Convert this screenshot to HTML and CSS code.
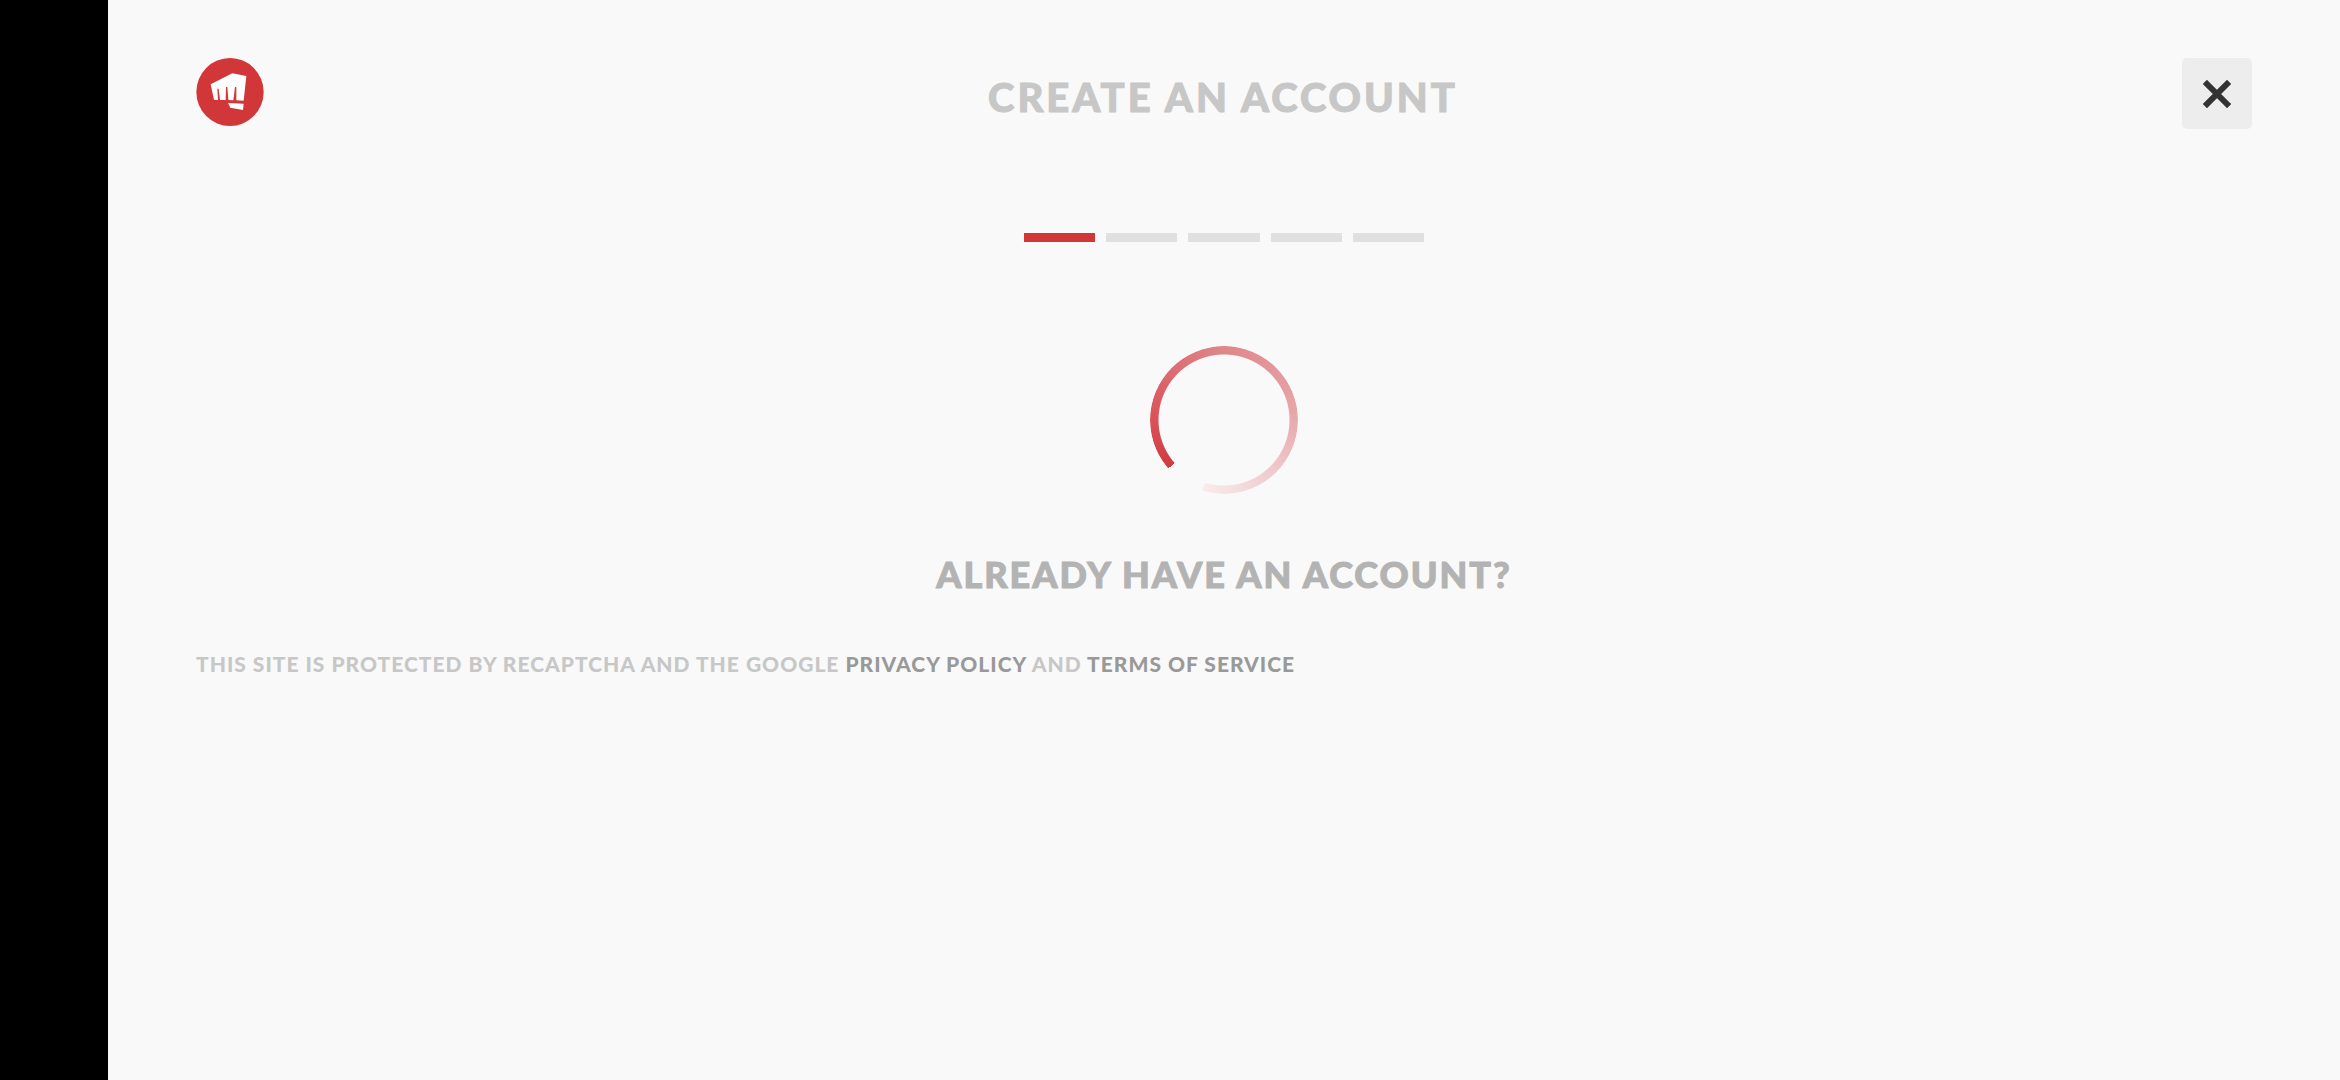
FILE: index.html
```html
<!DOCTYPE html>
<html lang="en">
<head>
    <meta charset="UTF-8">
    <meta name="viewport" content="width=device-width, initial-scale=1">
    <title>Create an account</title>
    <link rel="stylesheet" href="styles.css">
</head>
<body>
    <main class="signup">
        <header class="header">
            <a class="logo" href="/" aria-label="Home">
                <svg viewBox="0 0 202 204">
                    <ellipse cx="101" cy="102" rx="101" ry="102" fill="#d13639"/>
                    <path fill="#fff" d="M43 79 L108 46 L150 54 L142 128 L120 127 L120 87 L116 87 L111 127 L96 126 L93 87 L89 87 L88 126 L71 126 L67 92 L63 92 L65 126 L53 125 Z"/>
                    <path fill="#fff" d="M95 135 L142 137 L140 156 L102 149 Z"/>
                </svg>
            </a>
            <h1 class="title">Create an account</h1>
            <button class="close" type="button" aria-label="Close">
                <svg viewBox="0 0 28 28">
                    <path d="M4 4 L24 24 M24 4 L4 24" stroke="#333" stroke-width="6" stroke-linecap="square"/>
                </svg>
            </button>
        </header>

        <!-- signup steps -->
        <ol class="steps">
            <li class="step active"></li>
            <li class="step"></li>
            <li class="step"></li>
            <li class="step"></li>
            <li class="step"></li>
        </ol>

        <div class="spinner" role="status" aria-label="Loading"></div>

        <a class="login" href="/login">Already have an account?</a>

        <p class="legal">This site is protected by reCAPTCHA and the Google <a href="/privacy">Privacy Policy</a> and <a href="/terms">Terms of Service</a></p>
    </main>
</body>
</html>
```
FILE: styles.css
```css
* {
    box-sizing: border-box;
}

body {
    margin: 0;
    min-height: 100vh;
    background-color: #f9f9f9;
    border-left: 108px solid #000;
    font-family: "Lato Black", Lato, sans-serif;
    font-weight: 900;
    text-transform: uppercase;
}

a {
    text-decoration: none;
}

.signup {
    display: flex;
    flex-direction: column;
    align-items: center;
    padding: 58px 88px;
}

.header {
    display: flex;
    justify-content: space-between;
    align-items: flex-start;
    width: 100%;
}

.logo {
    width: 68px;
    height: 68px;
}

.logo svg {
    display: block;
    width: 100%;
    height: 100%;
}

.title {
    margin: 0;
    padding-top: 15px;
    color: #c7c7c7;
    font-size: 40px;
    font-weight: 900;
    line-height: 48px;
    letter-spacing: 3px;
    -webkit-text-stroke: 1px;
}

.close {
    display: flex;
    justify-content: center;
    align-items: center;
    width: 70px;
    height: 71px;
    padding: 0;
    border: none;
    border-radius: 5px;
    background-color: #ededed;
    cursor: pointer;
}

.close svg {
    width: 28px;
    height: 28px;
}

.steps {
    display: flex;
    gap: 11px;
    width: 400px;
    margin: 104px 0 0;
    padding: 0;
    list-style: none;
}

.step {
    flex: 1;
    height: 9px;
    background-color: #e0e0e0;
}

.step.active {
    background-color: #d13639;
}

.spinner {
    width: 148px;
    height: 148px;
    margin-top: 104px;
    border-radius: 50%;
    background: conic-gradient(from 229deg, #cf3b40, #da5258 41deg, #de8488 125deg, #e8a6a9 215deg, #f0cfd1 275deg, #f9ecec 328deg, transparent 328deg);
    -webkit-mask: radial-gradient(circle closest-side, transparent 65px, #000 66px);
    mask: radial-gradient(circle closest-side, transparent 65px, #000 66px);
}

.login {
    margin-top: 56px;
    color: #b3b3b3;
    font-size: 36px;
    line-height: 48px;
    letter-spacing: 2px;
    -webkit-text-stroke: 1px;
}

.legal {
    align-self: flex-start;
    margin: 52px 0 0;
    color: #c7c7c7;
    font-size: 21px;
    line-height: 28px;
    letter-spacing: 1px;
}

.legal a {
    color: #999;
}
```
